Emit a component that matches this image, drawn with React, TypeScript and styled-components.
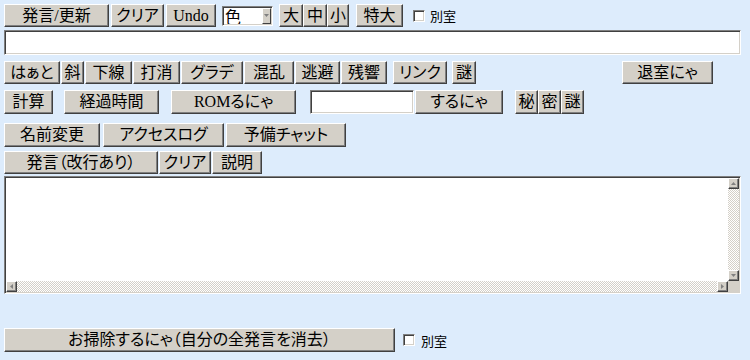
import React from "react";
import styled, { createGlobalStyle } from "styled-components";

const GlobalStyle = createGlobalStyle`
  html, body {
    margin: 0;
    padding: 0;
    background: #ddecfc;
  }
  body {
    font-family: "Noto Sans CJK JP", "Noto Sans", sans-serif;
  }
`;

const Page = styled.div`
  width: 750px;
  height: 360px;
  box-sizing: border-box;
  padding: 4px 0 0 4px;
  background: #ddecfc;
  overflow: hidden;
`;

const Row = styled.div<{ $h: number; $mt?: number }>`
  display: flex;
  align-items: center;
  height: ${(p) => p.$h}px;
  margin-top: ${(p) => p.$mt ?? 0}px;
`;

const Btn = styled.button<{ $w: number; $ml?: number }>`
  box-sizing: border-box;
  width: ${(p) => p.$w}px;
  height: 100%;
  margin: 0 0 0 ${(p) => p.$ml ?? 0}px;
  padding: 0;
  display: flex;
  align-items: center;
  justify-content: center;
  background: #d4d0c8;
  color: #000;
  border: 1px solid;
  border-color: #fff #404040 #404040 #fff;
  box-shadow: inset -1px -1px #808080;
  font-family: "Liberation Serif", "Noto Sans CJK JP", serif;
  font-size: 16px;
  font-weight: 400;
  line-height: 1;
  font-feature-settings: "palt";
  white-space: nowrap;
  cursor: default;
`;

const TextInput = styled.input<{ $w: number; $ml?: number }>`
  box-sizing: border-box;
  width: ${(p) => p.$w}px;
  height: 100%;
  margin: 0 0 0 ${(p) => p.$ml ?? 0}px;
  padding: 0 3px;
  background: #fff;
  border: 1px solid;
  border-color: #808080 #fff #fff #808080;
  box-shadow: inset 1px 1px #404040, inset -1px -1px #d4d0c8;
  font-family: "Noto Sans CJK JP", sans-serif;
  font-size: 14px;
  outline: none;
`;

const SelectBox = styled.div`
  box-sizing: border-box;
  display: flex;
  width: 51px;
  height: 20px;
  margin-left: 6px;
  padding: 1px;
  background: #fff;
  border: 1px solid;
  border-color: #808080 #fff #fff #808080;
  box-shadow: inset 1px 1px #404040, inset -1px -1px #d4d0c8;
`;

const Select = styled.select`
  appearance: none;
  flex: 1;
  min-width: 0;
  margin: 0;
  padding: 0 0 0 1px;
  border: 0;
  background: transparent;
  color: #000;
  font-family: "Noto Sans CJK JP", sans-serif;
  font-size: 16px;
  line-height: 16px;
  outline: none;
`;

const SelectArrow = styled.span`
  box-sizing: border-box;
  width: 9px;
  display: flex;
  align-items: center;
  justify-content: center;
  background: #d4d0c8;
  border: 1px solid;
  border-color: #fff #404040 #404040 #fff;
`;

const Check = styled.input.attrs({ type: "checkbox" })<{ $ml: number }>`
  appearance: none;
  box-sizing: border-box;
  width: 12px;
  height: 12px;
  margin: 0 0 0 ${(p) => p.$ml}px;
  background: #fff;
  border: 1px solid;
  border-color: #808080 #fff #fff #808080;
  box-shadow: inset 1px 1px #404040, inset -1px -1px #d4d0c8;
`;

const CheckLabel = styled.span<{ $ml: number }>`
  margin-left: ${(p) => p.$ml}px;
  font-family: "Noto Sans CJK JP", sans-serif;
  font-size: 13px;
  color: #000;
`;

const Memo = styled.div`
  box-sizing: border-box;
  width: 737px;
  height: 118px;
  margin-top: 2px;
  padding: 1px;
  display: grid;
  grid-template-columns: 1fr 11px;
  grid-template-rows: 1fr 11px;
  background: #fff;
  border: 1px solid;
  border-color: #808080 #fff #fff #808080;
  box-shadow: inset 1px 1px #404040, inset -1px -1px #d4d0c8;
`;

const MemoArea = styled.textarea`
  box-sizing: border-box;
  width: 100%;
  height: 100%;
  margin: 0;
  padding: 2px;
  border: 0;
  resize: none;
  outline: none;
  overflow: hidden;
  background: #fff;
  font-family: "Noto Sans CJK JP", sans-serif;
  font-size: 14px;
`;

const Bar = styled.div<{ $vertical?: boolean }>`
  display: flex;
  flex-direction: ${(p) => (p.$vertical ? "column" : "row")};
`;

const Track = styled.div`
  flex: 1;
  background: repeating-conic-gradient(#d4d0c8 0 25%, #fff 0 50%) 0 0 / 2px 2px;
`;

const ScrollBtn = styled.div`
  box-sizing: border-box;
  flex: 0 0 11px;
  width: 11px;
  height: 11px;
  display: flex;
  align-items: center;
  justify-content: center;
  background: #d4d0c8;
  border: 1px solid;
  border-color: #fff #404040 #404040 #fff;
  box-shadow: inset -1px -1px #808080;
`;

const Corner = styled.div`
  background: #d4d0c8;
`;

type Dir = "up" | "down" | "left" | "right";

const arrowPoints: Record<Dir, string> = {
  up: "0,3 5,3 2.5,0",
  down: "0,0 5,0 2.5,3",
  left: "3,0 3,5 0,2.5",
  right: "0,0 0,5 3,2.5",
};

const Arrow = ({ dir }: { dir: Dir }) => {
  const wide = dir === "up" || dir === "down";
  return (
    <svg width={wide ? 5 : 3} height={wide ? 3 : 5} viewBox={wide ? "0 0 5 3" : "0 0 3 5"}>
      <polygon points={arrowPoints[dir]} fill="#808080" />
    </svg>
  );
};

type B = [string, number, number?];

const row1: B[] = [
  ["発言/更新", 105],
  ["クリア", 53, 2],
  ["Undo", 50, 2],
];
const sizes: B[] = [
  ["大", 24, 6],
  ["中", 24],
  ["小", 22],
  ["特大", 47, 7],
];
const row3: B[] = [
  ["はぁと", 56],
  ["斜", 23, 1],
  ["下線", 47, 1],
  ["打消", 47, 1],
  ["グラデ", 62, 1],
  ["混乱", 50, 1],
  ["逃避", 45, 1],
  ["残響", 46, 1],
  ["リンク", 54, 6],
  ["謎", 24, 5],
  ["退室にゃ", 91, 146],
];
const row4a: B[] = [
  ["計算", 49],
  ["経過時間", 95, 11],
  ["ROMるにゃ", 125, 12],
];
const row4b: B[] = [
  ["するにゃ", 88, 1],
  ["秘", 23, 12],
  ["密", 23],
  ["謎", 23],
];
const row5: B[] = [
  ["名前変更", 96],
  ["アクセスログ", 121, 3],
  ["予備チャット", 120, 2],
];
const row6: B[] = [
  ["発言（改行あり）", 154],
  ["クリア", 52, 1],
  ["説明", 50, 1],
];

const buttons = (list: B[]) =>
  list.map(([label, w, ml]) => (
    <Btn key={label + w} $w={w} $ml={ml}>
      {label}
    </Btn>
  ));

const App = () => {
  return (
    <>
      <GlobalStyle />
      <Page>
        <Row $h={23}>
          {buttons(row1)}
          <SelectBox>
            <Select defaultValue="色">
              <option>色</option>
            </Select>
            <SelectArrow>
              <Arrow dir="down" />
            </SelectArrow>
          </SelectBox>
          {buttons(sizes)}
          <Check $ml={10} />
          <CheckLabel $ml={5}>別室</CheckLabel>
        </Row>
        <Row $h={25} $mt={3}>
          <TextInput $w={737} />
        </Row>
        <Row $h={23} $mt={6}>
          {buttons(row3)}
        </Row>
        <Row $h={24} $mt={6}>
          {buttons(row4a)}
          <TextInput $w={104} $ml={14} />
          {buttons(row4b)}
        </Row>
        <Row $h={24} $mt={9}>
          {buttons(row5)}
        </Row>
        <Row $h={23} $mt={4}>
          {buttons(row6)}
        </Row>
        <Memo>
          <MemoArea />
          <Bar $vertical>
            <ScrollBtn>
              <Arrow dir="up" />
            </ScrollBtn>
            <Track />
            <ScrollBtn>
              <Arrow dir="down" />
            </ScrollBtn>
          </Bar>
          <Bar>
            <ScrollBtn>
              <Arrow dir="left" />
            </ScrollBtn>
            <Track />
            <ScrollBtn>
              <Arrow dir="right" />
            </ScrollBtn>
          </Bar>
          <Corner />
        </Memo>
        <Row $h={24} $mt={34}>
          <Btn $w={391}>お掃除するにゃ（自分の全発言を消去）</Btn>
          <Check $ml={8} />
          <CheckLabel $ml={6}>別室</CheckLabel>
        </Row>
      </Page>
    </>
  );
};

export default App;
